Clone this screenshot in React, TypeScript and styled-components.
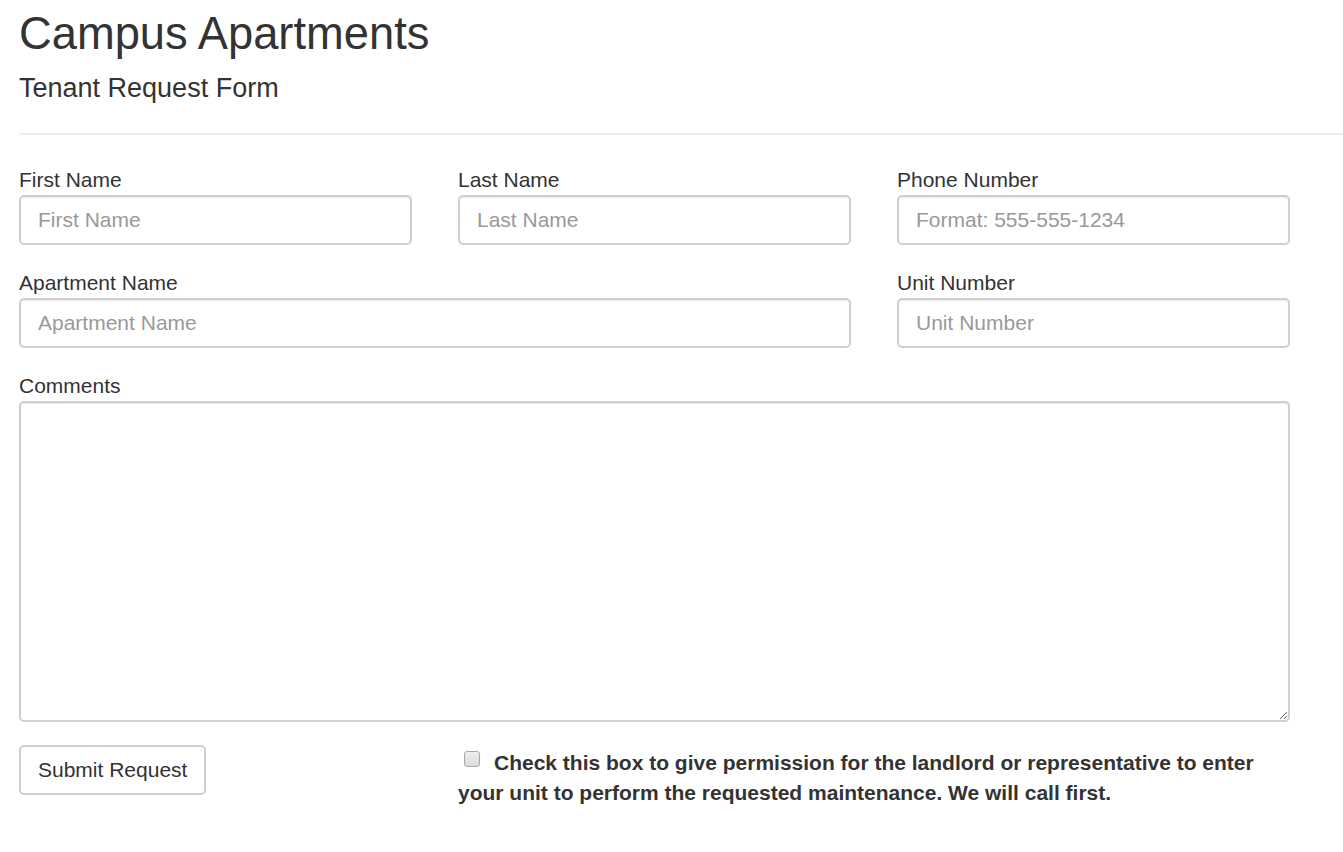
import React from "react";
import styled, { createGlobalStyle } from "styled-components";

const Global = createGlobalStyle`
  html, body { margin: 0; padding: 0; background: #fff; }
  body {
    font-family: "Liberation Sans", Arial, Helvetica, sans-serif;
    color: #333;
  }
  * { box-sizing: border-box; }
`;

const Page = styled.div`
  padding: 9px 0 40px 19px;
`;

const Title = styled.h1`
  margin: 0;
  font-size: 45.3px;
  line-height: 50px;
  font-weight: 400;
  color: #333;
`;

const Subtitle = styled.h3`
  margin: 14px 0 0;
  font-size: 27px;
  line-height: 30px;
  font-weight: 400;
  color: #333;
`;

const Rule = styled.hr`
  margin: 30px 0 0;
  border: 0;
  height: 2px;
  background: #eee;
`;

const FormGrid = styled.form`
  margin-top: 33px;
  width: 1271px;
  display: grid;
  grid-template-columns: repeat(3, 393px);
  column-gap: 46px;
  row-gap: 26px;
`;

const Field = styled.div<{ $span?: number }>`
  display: flex;
  flex-direction: column;
  grid-column: span ${(p) => p.$span ?? 1};
`;

const Label = styled.label`
  font-size: 21px;
  line-height: 24px;
  margin-bottom: 3px;
  color: #333;
`;

const Input = styled.input`
  height: 50px;
  width: 100%;
  padding: 0 17px;
  font-family: inherit;
  font-size: 21px;
  color: #555;
  background: #fff;
  border: 2px solid #cfcfcf;
  border-radius: 5px;
  box-shadow: inset 0 1px 1px rgba(0, 0, 0, 0.075);
  outline: none;
  &::placeholder { color: #999; opacity: 1; }
`;

const TextArea = styled.textarea`
  height: 321px;
  width: 100%;
  padding: 8px 17px;
  font-family: inherit;
  font-size: 21px;
  color: #555;
  background: #fff;
  border: 2px solid #cfcfcf;
  border-radius: 5px;
  box-shadow: inset 0 1px 1px rgba(0, 0, 0, 0.075);
  outline: none;
  resize: vertical;
`;

const Footer = styled.div`
  margin-top: -3px;
  grid-column: span 3;
  display: grid;
  grid-template-columns: 393px 1fr;
  column-gap: 46px;
  align-items: start;
`;

const Button = styled.button`
  justify-self: start;
  height: 50px;
  padding: 0 17px;
  font-family: inherit;
  font-size: 21px;
  color: #333;
  background: #fff;
  border: 2px solid #cfcfcf;
  border-radius: 5px;
  cursor: pointer;
`;

const Consent = styled.label`
  display: block;
  padding-top: 3px;
  font-size: 21px;
  line-height: 30px;
  font-weight: 700;
  color: #333;
`;

const Check = styled.input`
  appearance: none;
  -webkit-appearance: none;
  display: inline-block;
  vertical-align: top;
  width: 16px;
  height: 16px;
  margin: 3px 14px 0 6px;
  border: 1px solid #a8a8a8;
  border-radius: 3px;
  background: linear-gradient(#efefef, #dadada);
`;

export default function App() {
  return (
    <>
      <Global />
      <Page>
        <Title>Campus Apartments</Title>
        <Subtitle>Tenant Request Form</Subtitle>
        <Rule />
        <FormGrid onSubmit={(e) => e.preventDefault()}>
          <Field>
            <Label>First Name</Label>
            <Input placeholder="First Name" />
          </Field>
          <Field>
            <Label>Last Name</Label>
            <Input placeholder="Last Name" />
          </Field>
          <Field>
            <Label>Phone Number</Label>
            <Input placeholder="Format: 555-555-1234" />
          </Field>
          <Field $span={2}>
            <Label>Apartment Name</Label>
            <Input placeholder="Apartment Name" />
          </Field>
          <Field>
            <Label>Unit Number</Label>
            <Input placeholder="Unit Number" />
          </Field>
          <Field $span={3}>
            <Label>Comments</Label>
            <TextArea />
          </Field>
          <Footer>
            <Button type="submit">Submit Request</Button>
            <Consent>
              <Check type="checkbox" />
              Check this box to give permission for the landlord or representative to enter your unit to perform the requested maintenance. We will call first.
            </Consent>
          </Footer>
        </FormGrid>
      </Page>
    </>
  );
}
